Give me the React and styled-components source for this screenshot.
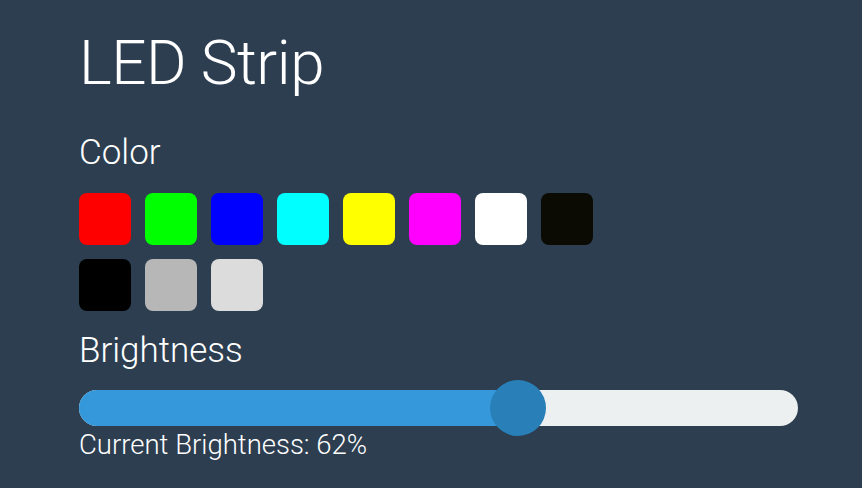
import React from "react"
import styled, { createGlobalStyle } from "styled-components"

const GlobalStyle = createGlobalStyle`
  html, body {
    margin: 0;
    padding: 0;
    background: #2c3e50;
  }
  body {
    font-family: "Roboto Light", Roboto, "Liberation Sans", sans-serif;
    font-weight: 300;
    color: #fff;
  }
`

const Page = styled.div`
  width: 862px;
  height: 488px;
  box-sizing: border-box;
  padding: 23px 64px 0 79px;
  background: #2c3e50;
  overflow: hidden;
`

const Title = styled.h1`
  margin: 0;
  font-size: 62px;
  font-weight: 200;
  line-height: 80px;
  letter-spacing: -0.5px;
`

const Heading = styled.h2`
  margin: ${({ $top }) => $top}px 0 0;
  font-size: 35px;
  font-weight: 300;
  line-height: 40px;
`

const Swatches = styled.div`
  display: grid;
  grid-template-columns: repeat(8, 52px);
  grid-auto-rows: 52px;
  gap: 14px;
  margin: 20px 0 0;
`

const Swatch = styled.button`
  width: 52px;
  height: 52px;
  padding: 0;
  border: none;
  border-radius: 8px;
  background: ${({ $color }) => $color};
  cursor: pointer;
`

const Slider = styled.div`
  position: relative;
  height: 36px;
  margin-top: 19px;
  border-radius: 18px;
  background: #ecf0f1;
`

const Fill = styled.div`
  height: 100%;
  border-radius: 18px 0 0 18px;
  background: #3498db;
`

const Thumb = styled.div`
  position: absolute;
  top: 50%;
  width: 56px;
  height: 56px;
  margin: -28px 0 0 -28px;
  border-radius: 50%;
  background: #2980b9;
`

const Caption = styled.div`
  margin-top: 3px;
  font-size: 27.5px;
  line-height: 32px;
`

const colors = [
  "#ff0000",
  "#00ff00",
  "#0000ff",
  "#00ffff",
  "#ffff00",
  "#ff00ff",
  "#ffffff",
  "#0b0a03",
  "#000000",
  "#b7b7b7",
  "#dcdcdc",
]

const brightness = 62
const trackWidth = 719
const thumbSize = 56

export default () => {
  const center = (brightness / 100) * (trackWidth - thumbSize) + thumbSize / 2
  return (
    <>
      <GlobalStyle />
      <Page>
        <Title>LED Strip</Title>
        <Heading $top={30}>Color</Heading>
        <Swatches>
          {colors.map(c => (
            <Swatch key={c} $color={c} aria-label={c} />
          ))}
        </Swatches>
        <Heading $top={20}>Brightness</Heading>
        <Slider>
          <Fill style={{ width: center }} />
          <Thumb style={{ left: center }} />
        </Slider>
        <Caption>Current Brightness: {brightness}%</Caption>
      </Page>
    </>
  )
}
